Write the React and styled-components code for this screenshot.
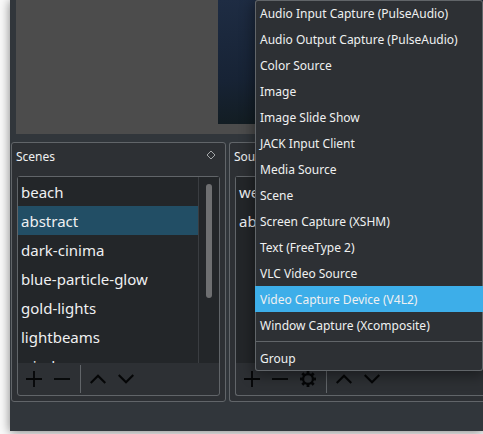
import React from "react";
import styled, { createGlobalStyle } from "styled-components";

const GlobalStyle = createGlobalStyle`
  *, *::before, *::after { box-sizing: border-box; }
  body {
    margin: 0;
    background: #fafafa;
    color: #eff0f1;
    font: 12px/26px "Noto Sans", "Open Sans", sans-serif;
    overflow: hidden;
  }
  ul { margin: 0; padding: 0; list-style: none; }
  button {
    padding: 0;
    border: 0;
    background: none;
    color: inherit;
    font: inherit;
  }
`;

const Desktop = styled.div`
  position: relative;
  padding: 0 0 3px 10px;
  overflow: hidden;
`;

const AppWindow = styled.main`
  display: flex;
  flex-direction: column;
  gap: 8px;
  padding-bottom: 29px;
  background: #31363b;
  box-shadow: 0 1px 10px rgba(0, 0, 0, 0.5);
`;

const Preview = styled.section`
  display: flex;
  height: 134px;
  margin-left: 6px;
  padding: 0 0 10px 202px;
  background: #4c4c4c;
`;

const Canvas = styled.div`
  flex: 1;
  background: linear-gradient(175deg, #1e2c43 0%, #172335 55%, #121c20 90%);
`;

const Docks = styled.div`
  display: flex;
  gap: 3px;
  padding-left: 1px;
`;

const Dock = styled.section`
  flex: ${(p) => (p.$fill ? "1" : "0 0 215px")};
  min-width: 0;
  padding: 0 ${(p) => (p.$fill ? "0" : "5px")} 5px 5px;
  border: 1px solid #616569;
  border-right-width: ${(p) => (p.$fill ? "0" : "1px")};
  border-radius: ${(p) => (p.$fill ? "3px 0 0 3px" : "3px")};
  background: #2d3034;
`;

const DockHeader = styled.header`
  display: flex;
  align-items: center;
  justify-content: space-between;
  height: 33px;
  padding-bottom: 6px;
  margin-left: -1px;
`;

const DockTitle = styled.h2`
  margin: 0;
  font-size: 12px;
  font-weight: 400;
`;

const FloatButton = styled.button`
  display: flex;
  margin: 0 4px 3px 0;
`;

const Frame = styled.div`
  border: 1px solid #616569;
  border-right-width: ${(p) => (p.$fill ? "0" : "1px")};
  border-radius: ${(p) => (p.$fill ? "3px 0 0 3px" : "3px")};
`;

const ListArea = styled.div`
  display: flex;
  height: 186px;
  background: #232629;
  overflow: hidden;
`;

const ItemList = styled.ul`
  flex: 1;
  font-size: 15px;
  line-height: 27px;
`;

const Item = styled.li`
  height: 29px;
  padding: 2px 0 0 3px;
  white-space: nowrap;
  background: ${(p) => (p.$selected ? "#224e65" : "transparent")};
`;

const ScrollTrack = styled.div`
  width: 21px;
  padding: 7px 7px 0;
  border-left: 1px solid #3a3d41;
`;

const ScrollThumb = styled.div`
  width: 6px;
  height: 114px;
  border-radius: 3px;
  background: #6e6f71;
`;

const Toolbar = styled.div`
  display: flex;
  height: 32px;
  padding: 2px;
`;

const ToolButton = styled.button`
  display: grid;
  place-items: center;
  width: 28px;
  height: 28px;
`;

const ToolDivider = styled.span`
  width: 1px;
  margin: 0 3px 0 4px;
  background: #616569;
`;

const Menu = styled.ul`
  position: absolute;
  top: 0;
  left: 255px;
  right: 0;
  border-radius: 3px;
  background: #2d3034;
  box-shadow: inset 0 0 0 1px #616569, 0 3px 14px 2px rgba(0, 0, 0, 0.4);
`;

const MenuItem = styled.button`
  display: block;
  width: 100%;
  height: 26px;
  padding: 2px 5px 0;
  line-height: 24px;
  text-align: left;
  white-space: nowrap;
  background: ${(p) => (p.$active ? "#3daee9" : "transparent")};
`;

const MenuDivider = styled.li`
  height: 1px;
  margin: 3px 0;
  background: #616569;
`;

const Glyph = styled.svg`
  display: block;
  fill: none;
  stroke: #050607;
`;

const teeth = [0, 45, 90, 135, 180, 225, 270, 315];

function Icon({ name }) {
  return (
    <Glyph width="16" height="16" viewBox="0 0 16 16" aria-hidden="true">
      {name === "add" && <path d="M8 0V16M0 8H16" strokeWidth="1.8" />}
      {name === "remove" && <path d="M0 8H16" strokeWidth="1.8" />}
      {name === "up" && <path d="M0.7 12L8 4.7L15.3 12" strokeWidth="2.2" />}
      {name === "down" && <path d="M0.7 4L8 11.3L15.3 4" strokeWidth="2.2" />}
      {name === "settings" && (
        <>
          <circle cx="8" cy="8" r="4.9" strokeWidth="2.2" />
          {teeth.map((a) => (
            <path key={a} d="M8 0V3" strokeWidth="2.8" transform={`rotate(${a} 8 8)`} />
          ))}
        </>
      )}
    </Glyph>
  );
}

const scenes = ["beach", "abstract", "dark-cinima", "blue-particle-glow", "gold-lights", "lightbeams", "window"];
const sources = ["webcam", "abstract"];
const sourceTypes = [
  "Audio Input Capture (PulseAudio)",
  "Audio Output Capture (PulseAudio)",
  "Color Source",
  "Image",
  "Image Slide Show",
  "JACK Input Client",
  "Media Source",
  "Scene",
  "Screen Capture (XSHM)",
  "Text (FreeType 2)",
  "VLC Video Source",
  "Video Capture Device (V4L2)",
  "Window Capture (Xcomposite)",
];

function Tools({ settings }) {
  return (
    <Toolbar>
      <ToolButton aria-label="Add"><Icon name="add" /></ToolButton>
      <ToolButton aria-label="Remove"><Icon name="remove" /></ToolButton>
      {settings && <ToolButton aria-label="Properties"><Icon name="settings" /></ToolButton>}
      <ToolDivider />
      <ToolButton aria-label="Move up"><Icon name="up" /></ToolButton>
      <ToolButton aria-label="Move down"><Icon name="down" /></ToolButton>
    </Toolbar>
  );
}

export default function App() {
  return (
    <Desktop>
      <GlobalStyle />
      <AppWindow>
        <Preview><Canvas /></Preview>
        <Docks>
          <Dock>
            <DockHeader>
              <DockTitle>Scenes</DockTitle>
              <FloatButton aria-label="Float Scenes">
                <svg width="10" height="10" viewBox="0 0 10 10" fill="none" stroke="#a3a6a8" aria-hidden="true">
                  <path d="M5 1L9 5L5 9L1 5Z" />
                </svg>
              </FloatButton>
            </DockHeader>
            <Frame>
              <ListArea>
                <ItemList>
                  {scenes.map((s) => <Item key={s} $selected={s === "abstract"}>{s}</Item>)}
                </ItemList>
                <ScrollTrack><ScrollThumb /></ScrollTrack>
              </ListArea>
              <Tools />
            </Frame>
          </Dock>
          <Dock $fill>
            <DockHeader><DockTitle>Sources</DockTitle></DockHeader>
            <Frame $fill>
              <ListArea>
                <ItemList>{sources.map((s) => <Item key={s}>{s}</Item>)}</ItemList>
              </ListArea>
              <Tools settings />
            </Frame>
          </Dock>
        </Docks>
      </AppWindow>
      <Menu role="menu" aria-label="Add source">
        {sourceTypes.map((t) => (
          <li key={t} role="none">
            <MenuItem role="menuitem" $active={t.startsWith("Video Capture")}>{t}</MenuItem>
          </li>
        ))}
        <MenuDivider role="separator" />
        <li role="none"><MenuItem role="menuitem">Group</MenuItem></li>
      </Menu>
    </Desktop>
  );
}
